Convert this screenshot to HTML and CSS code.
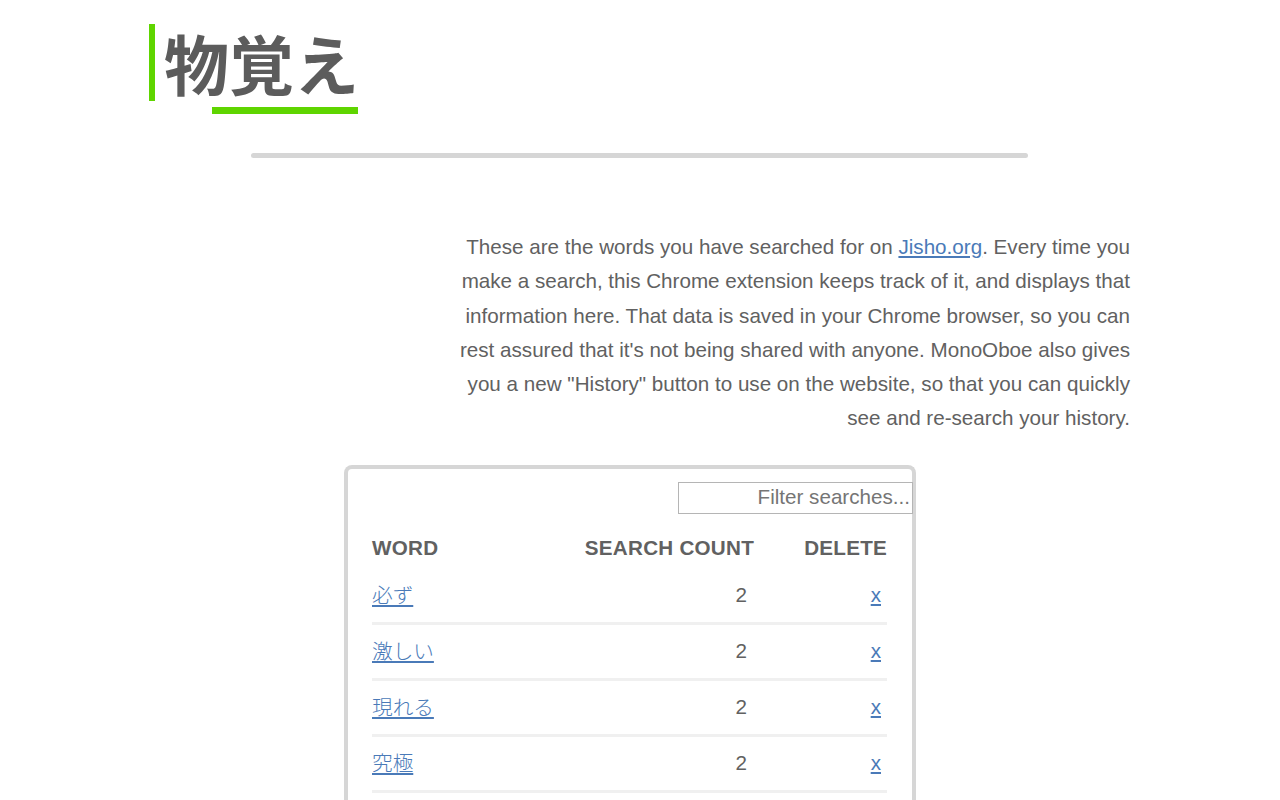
FILE: index.html
```html
<!DOCTYPE html>
<html>
<head>
  <meta charset="UTF-8">
  <title>MonoOboe</title>
  <link rel="stylesheet" href="styles.css">
</head>
<body>
  <div class="container">
    <div class="logo">物覚え</div>
    <hr class="divider">

    <p class="intro">These are the words you have searched for on <a href="#">Jisho.org</a>. Every time you<br>
    make a search, this Chrome extension keeps track of it, and displays that<br>
    information here. That data is saved in your Chrome browser, so you can<br>
    rest assured that it's not being shared with anyone. MonoOboe also gives<br>
    you a new "History" button to use on the website, so that you can quickly<br>
    see and re-search your history.</p>

    <div class="history-card">
      <input class="filter" type="text" placeholder="Filter searches...">
      <table class="history">
        <thead>
          <tr>
            <th class="col-word">Word</th>
            <th class="col-count">Search Count</th>
            <th class="col-delete">Delete</th>
          </tr>
        </thead>
        <tbody>
          <tr><td class="word"><a href="#">必ず</a></td><td class="count">2</td><td class="delete"><a href="#">x</a></td></tr>
          <tr><td class="word"><a href="#">激しい</a></td><td class="count">2</td><td class="delete"><a href="#">x</a></td></tr>
          <tr><td class="word"><a href="#">現れる</a></td><td class="count">2</td><td class="delete"><a href="#">x</a></td></tr>
          <tr><td class="word"><a href="#">究極</a></td><td class="count">2</td><td class="delete"><a href="#">x</a></td></tr>
        </tbody>
      </table>
    </div>
  </div>
</body>
</html>
```

FILE: styles.css
```css
html, body {
  height: 800px;
  overflow: hidden;
}

body {
  margin: 0;
  font-family: "Liberation Sans", Arial, sans-serif;
  color: #616161;
  background-color: white;
}

a {
  color: #4a7ab8;
}

.container {
  width: 982px;
  margin: 0 auto;
  padding-top: 24px;
}

/* Logo with the green bar and underline */
.logo {
  position: relative;
  width: 200px;
  height: 77px;
  border-left: 6px solid #5fd500;
  padding-left: 9px;
  font-family: "Noto Sans CJK JP", sans-serif;
  font-size: 65px;
  font-weight: 700;
  line-height: 76px;
  white-space: nowrap;
  color: #5c5c5c;
}

.logo::after {
  content: "";
  position: absolute;
  left: 57px;
  top: 83px;
  width: 146px;
  height: 7px;
  background-color: #5fd500;
}

.divider {
  width: 777px;
  height: 5px;
  margin: 52px 0 0 102px;
  border: none;
  border-radius: 3px;
  background-color: #d6d6d6;
}

.intro {
  margin: 72px 0 0;
  padding-right: 1px;
  font-size: 20.64px;
  line-height: 34.3px;
  text-align: right;
}

.history-card {
  box-sizing: border-box;
  width: 572px;
  height: 400px;
  margin: 29px 0 0 195px;
  padding: 13px 24px 0;
  border: 4px solid #d6d6d6;
  border-bottom: none;
  border-radius: 8px 8px 0 0;
}

.filter {
  display: block;
  box-sizing: border-box;
  width: 235px;
  height: 32px;
  margin-left: 306px;
  padding: 0 2px 2px;
  border: 1px solid #b5b5b5;
  font-family: "Liberation Sans", Arial, sans-serif;
  font-size: 20.64px;
  text-align: right;
}

.filter::placeholder {
  color: #757575;
}

.history {
  width: 515px;
  margin-top: 22px;
  border-collapse: collapse;
  font-size: 20.64px;
}

.history th {
  padding: 0 0 9px;
  font-size: 20.64px;
  letter-spacing: 0.25px;
  text-align: right;
  text-transform: uppercase;
}

.history th.col-word {
  text-align: left;
}

.col-word {
  width: 182px;
}

.col-delete {
  width: 133px;
}

.history td {
  height: 53px;
  padding: 0;
  border-bottom: 3px solid #f0f0f0;
  font-family: "Liberation Sans", "Noto Sans CJK JP", sans-serif;
  font-weight: 300;
}

.history td.word {
  height: 50px;
  padding-bottom: 3px;
}

.history td.count {
  padding-right: 7px;
  text-align: right;
}

.history td.delete {
  padding-right: 6px;
  text-align: right;
}
```
